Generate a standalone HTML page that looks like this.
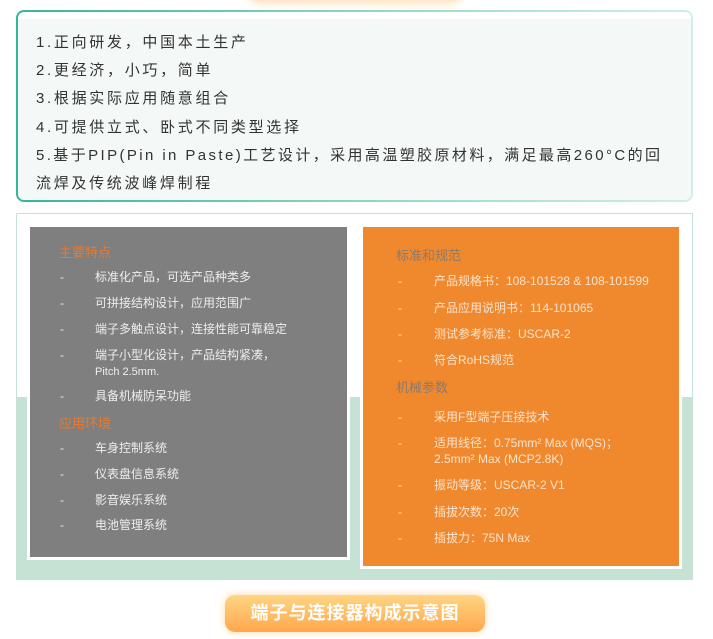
<!DOCTYPE html>
<html><head><meta charset="utf-8"><style>
*{margin:0;padding:0;box-sizing:border-box}
body{width:713px;height:639px;background:#fff;position:relative;overflow:hidden;font-family:"Liberation Sans","Noto Sans CJK SC",sans-serif}
.abs{position:absolute;white-space:nowrap;line-height:16px}
.topbox{position:absolute;left:16px;top:10px;width:677px;height:192px;border-radius:8px;padding:2px;background:linear-gradient(90deg,#35b59c,#9fdcc6 60%,#d0f0e2)}
.topin{width:100%;height:100%;border-radius:6px;background:linear-gradient(#fff 0,#fff 7px,#f4f9f8 7px)}
.tl{position:absolute;left:36px;font-size:15px;color:#333;letter-spacing:2.7px;white-space:nowrap}
.g{font-size:12px;color:#eee}
.o{font-size:12px;color:#fbe3cc}
.hg{font-size:13px;color:#e8792e}
.ho{font-size:13px;color:#8a7a6c}
</style></head><body>
<div class="abs" style="left:250px;top:-14px;width:210px;height:16px;border-radius:8px;box-shadow:0 0 10px #ffd9a8;background:#ffe8cc"></div>
<div class="topbox"><div class="topin"></div></div>
<div class="tl" style="top:31px">1.正向研发，中国本土生产</div>
<div class="tl" style="top:59px">2.更经济，小巧，简单</div>
<div class="tl" style="top:87px">3.根据实际应用随意组合</div>
<div class="tl" style="top:116px">4.可提供立式、卧式不同类型选择</div>
<div class="tl" style="top:144px;letter-spacing:2.4px">5.基于PIP(Pin in Paste)工艺设计，采用高温塑胶原材料，满足最高260°C的回</div>
<div class="tl" style="top:172px">流焊及传统波峰焊制程</div>

<div class="abs" style="left:16px;top:213px;width:677px;height:367px;border:1px solid #c5e2d5;background:#fff"></div>
<div class="abs" style="left:16px;top:397px;width:677px;height:183px;background:#c5e2d5"></div>

<div class="abs" style="left:27px;top:224px;width:323px;height:336px;background:#fff"></div>
<div class="abs" style="left:30px;top:227px;width:317px;height:330px;background:#7f7f7f"></div>
<div class="abs" style="left:360px;top:224px;width:322px;height:345px;background:#fff"></div>
<div class="abs" style="left:363px;top:227px;width:316px;height:339px;background:#f0892e"></div>

<div class="abs hg" style="left:59px;top:245px">主要特点</div>
<div class="abs g" style="left:60px;top:269px">-</div><div class="abs g" style="left:95px;top:269px">标准化产品，可选产品种类多</div>
<div class="abs g" style="left:60px;top:295px">-</div><div class="abs g" style="left:95px;top:295px">可拼接结构设计，应用范围广</div>
<div class="abs g" style="left:60px;top:321px">-</div><div class="abs g" style="left:95px;top:321px">端子多触点设计，连接性能可靠稳定</div>
<div class="abs g" style="left:60px;top:347px">-</div><div class="abs g" style="left:95px;top:347px">端子小型化设计，产品结构紧凑，</div>
<div class="abs g" style="left:95px;top:364px;font-size:11px">Pitch 2.5mm.</div>
<div class="abs g" style="left:60px;top:388px">-</div><div class="abs g" style="left:95px;top:388px">具备机械防呆功能</div>
<div class="abs hg" style="left:59px;top:416px">应用环境</div>
<div class="abs g" style="left:60px;top:440px">-</div><div class="abs g" style="left:95px;top:440px">车身控制系统</div>
<div class="abs g" style="left:60px;top:466px">-</div><div class="abs g" style="left:95px;top:466px">仪表盘信息系统</div>
<div class="abs g" style="left:60px;top:492px">-</div><div class="abs g" style="left:95px;top:492px">影音娱乐系统</div>
<div class="abs g" style="left:60px;top:517px">-</div><div class="abs g" style="left:95px;top:517px">电池管理系统</div>

<div class="abs ho" style="left:396px;top:248px">标准和规范</div>
<div class="abs o" style="left:398px;top:273px">-</div><div class="abs o" style="left:434px;top:273px">产品规格书：108-101528 &amp; 108-101599</div>
<div class="abs o" style="left:398px;top:300px">-</div><div class="abs o" style="left:434px;top:300px">产品应用说明书：114-101065</div>
<div class="abs o" style="left:398px;top:326px">-</div><div class="abs o" style="left:434px;top:326px">测试参考标准：USCAR-2</div>
<div class="abs o" style="left:398px;top:352px">-</div><div class="abs o" style="left:434px;top:352px">符合RoHS规范</div>
<div class="abs ho" style="left:396px;top:380px">机械参数</div>
<div class="abs o" style="left:398px;top:409px">-</div><div class="abs o" style="left:434px;top:409px">采用F型端子压接技术</div>
<div class="abs o" style="left:398px;top:435px">-</div><div class="abs o" style="left:434px;top:435px">适用线径：0.75mm² Max (MQS)；</div>
<div class="abs o" style="left:434px;top:451px">2.5mm² Max (MCP2.8K)</div>
<div class="abs o" style="left:398px;top:477px">-</div><div class="abs o" style="left:434px;top:477px">振动等级：USCAR-2 V1</div>
<div class="abs o" style="left:398px;top:504px">-</div><div class="abs o" style="left:434px;top:504px">插拔次数：20次</div>
<div class="abs o" style="left:398px;top:530px">-</div><div class="abs o" style="left:434px;top:530px">插拔力：75N Max</div>

<div class="abs" style="left:225px;top:595px;width:260px;height:37px;border-radius:10px;background:linear-gradient(#ffd584,#ffa74c);box-shadow:0 0 8px #ffd9a0;color:#fff;font-weight:bold;font-size:18px;text-align:center;line-height:37px;letter-spacing:1px">端子与连接器构成示意图</div>
</body></html>
